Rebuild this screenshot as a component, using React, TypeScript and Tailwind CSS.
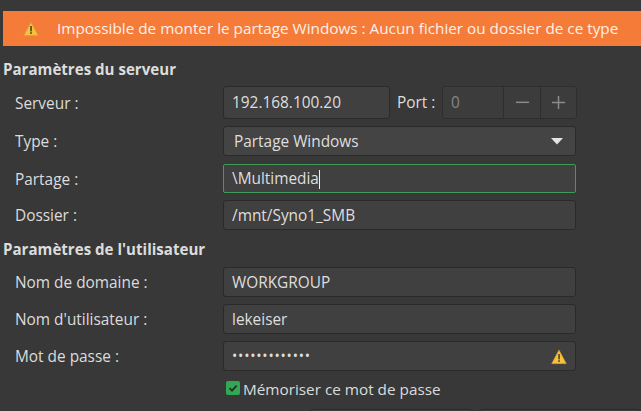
const FONT = "font-['Open_Sans','Noto_Sans',sans-serif]";

function WarningIcon({ className }: { className: string }) {
  return (
    <svg viewBox="0 0 16 16" className={className}>
      <path d="M8 1.2 15.2 14.6H.8Z" fill="#f6c141" stroke="#d9a032" strokeWidth="0.8" strokeLinejoin="round" />
      <rect x="7.2" y="5" width="1.7" height="5.4" fill="#5b4a1e" />
      <rect x="7.2" y="11.2" width="1.7" height="1.7" fill="#5b4a1e" />
    </svg>
  );
}

const inputBox = "flex items-center rounded-[3px] border border-[#2a2a2a] bg-[#404040] px-2 pt-px text-[#dedede]";

function Row({ label, top, height, children }: { label: string; top: string; height: string; children: React.ReactNode }) {
  return (
    <div className={`flex items-center ${top} ${height}`}>
      <div className="w-[223px] pt-[2px] pl-[15px] text-[#dcdcdc]">{label}</div>
      {children}
    </div>
  );
}

export default function App() {
  return (
    <div className={`h-[411px] w-[641px] overflow-hidden bg-[#383838] pt-[11px] text-[15.4px] ${FONT}`}>
      {/* message banner */}
      <div className="ml-[3px] flex h-[35px] items-center bg-[#f57b38] text-[#fdf0ea]">
        <WarningIcon className="ml-[20px] h-[16px] w-[16px]" />
        <span className="ml-[18px] whitespace-nowrap text-[15.3px]">Impossible de monter le partage Windows : Aucun fichier ou dossier de ce type</span>
      </div>

      <div className="mt-[14px] h-[19px] pl-[3px] text-[15.1px] leading-[19px] font-bold text-[#dcdcdc]">Paramètres du serveur</div>

      <Row label="Serveur :" top="mt-[7px]" height="h-[33px]">
        <div className={`${inputBox} h-full w-[167px] pl-[8px]`}>192.168.100.20</div>
        <div className="ml-[7px] w-[45px] whitespace-nowrap pt-px text-[#dcdcdc]">Port :</div>
        <div className="flex h-full w-[135px] rounded-[3px] border border-[#2e2e2e] bg-[#3c3c3c]">
          <div className="flex w-[60px] items-center pt-px pl-[8px] text-[#858585]">0</div>
          <div className="flex w-[37px] items-center justify-center border-l border-[#2e2e2e]">
            <svg viewBox="0 0 16 16" className="h-[15px] w-[15px]"><rect x="1" y="7" width="14" height="1.6" fill="#8a8a8a" /></svg>
          </div>
          <div className="flex flex-1 items-center justify-center border-l border-[#2e2e2e]">
            <svg viewBox="0 0 16 16" className="h-[15px] w-[15px]"><path d="M1 7.2h14v1.6H1ZM7.2 1h1.6v14H7.2Z" fill="#8a8a8a" /></svg>
          </div>
        </div>
      </Row>

      <Row label="Type :" top="mt-[7px]" height="h-[30px]">
        <div className="flex h-full w-[353px] items-center justify-between rounded-[3px] border border-[#2a2a2a] bg-[#444444] pt-px pr-[12px] pl-[10px] text-[#dedede]">
          <span>Partage Windows</span>
          <svg viewBox="0 0 12 7" className="h-[7px] w-[12px]"><path d="M0 0h12L6 6.5Z" fill="#e4e4e4" /></svg>
        </div>
      </Row>

      <Row label="Partage :" top="mt-[8px]" height="h-[29px]">
        <div className="flex h-full w-[353px] items-center rounded-[2px] border border-[#3f9b55] bg-[#404040] pt-px pl-[8px] text-[#dedede]">
          <span>\Multimedia</span>
          <span className="h-[19px] w-px bg-[#f0f0f0]" />
        </div>
      </Row>

      <Row label="Dossier :" top="mt-[7px]" height="h-[30px]">
        <div className={`${inputBox} h-full w-[353px]`}>/mnt/Syno1_SMB</div>
      </Row>

      <div className="mt-[9px] h-[19px] pt-px pl-[3px] text-[15.1px] leading-[19px] font-bold text-[#dcdcdc]">Paramètres de l'utilisateur</div>

      <Row label="Nom de domaine :" top="mt-[9px]" height="h-[30px]">
        <div className={`${inputBox} h-full w-[353px]`}>WORKGROUP</div>
      </Row>

      <Row label="Nom d'utilisateur :" top="mt-[7px]" height="h-[30px]">
        <div className={`${inputBox} h-full w-[353px]`}>lekeiser</div>
      </Row>

      <Row label="Mot de passe :" top="mt-[7px]" height="h-[30px]">
        <div className={`${inputBox} h-full w-[353px] justify-between pr-[8px]`}>
          <span className="-translate-y-px text-[14px] tracking-[0.8px]">•••••••••••••</span>
          <WarningIcon className="h-[16px] w-[16px]" />
        </div>
      </Row>

      <div className="mt-[8px] flex h-[18px] items-center pl-[226px]">
        <div className="flex h-[14px] w-[14px] items-center justify-center rounded-[2px] bg-[#33a853]">
          <svg viewBox="0 0 14 14" className="h-[14px] w-[14px]"><path d="M3.5 7.2 6 9.6 10.6 4.6" fill="none" stroke="#2b2b2b" strokeWidth="1.8" /></svg>
        </div>
        <span className="ml-[3px] pt-[2px] text-[15.3px] text-[#dcdcdc]">Mémoriser ce mot de passe</span>
      </div>

      {/* dialog buttons, cut off by the window */}
      <div className="mt-[12px] ml-[310px] flex gap-[6px]">
        <div className="h-[30px] w-[163px] rounded-[3px] border border-[#2a2a2a] bg-[#404040]" />
        <div className="h-[30px] flex-1 rounded-[3px] border border-[#2a2a2a] bg-[#404040]" />
      </div>
    </div>
  );
}
